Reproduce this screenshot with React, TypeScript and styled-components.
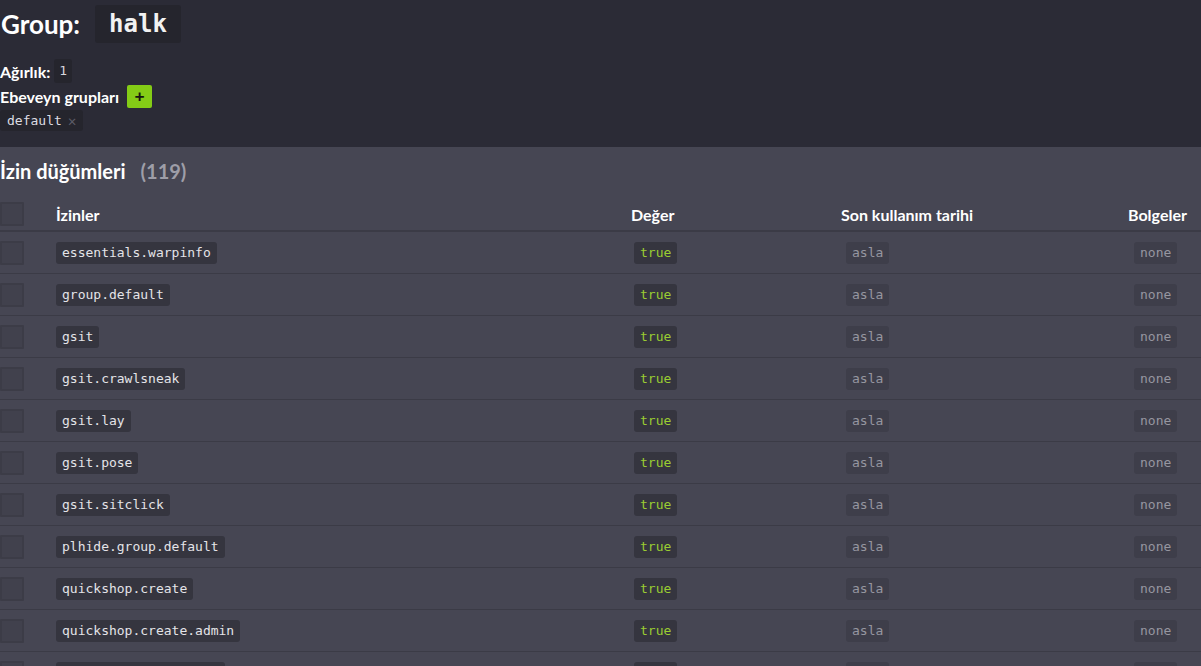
import styled, { createGlobalStyle } from "styled-components";

const GlobalStyle = createGlobalStyle`
  html, body {
    margin: 0;
    padding: 0;
    background: #464653;
    font-family: Lato, "Noto Sans", sans-serif;
    color: #fff;
    overflow: hidden;
  }
`;

const permissions = [
  "essentials.warpinfo",
  "group.default",
  "gsit",
  "gsit.crawlsneak",
  "gsit.lay",
  "gsit.pose",
  "gsit.sitclick",
  "plhide.group.default",
  "quickshop.create",
  "quickshop.create.admin",
  "quickshop.create.buy",
];

export default function App() {
  return (
    <>
      <GlobalStyle />
      <Stl.Top>
        <Stl.TitleRow>
          <Stl.Title>Group:</Stl.Title>
          <Stl.TitleCode>halk</Stl.TitleCode>
        </Stl.TitleRow>
        <Stl.Field>
          <Stl.Label>Ağırlık:</Stl.Label>
          <Stl.SmallCode>1</Stl.SmallCode>
        </Stl.Field>
        <Stl.Field>
          <Stl.Label>Ebeveyn grupları</Stl.Label>
          <Stl.AddButton>+</Stl.AddButton>
        </Stl.Field>
        <Stl.Chips>
          <Stl.Chip>
            default<Stl.ChipClose>×</Stl.ChipClose>
          </Stl.Chip>
        </Stl.Chips>
      </Stl.Top>
      <Stl.Bottom>
        <Stl.SectionTitle>
          İzin düğümleri<Stl.Count>(119)</Stl.Count>
        </Stl.SectionTitle>
        <Stl.Table>
          <thead>
            <tr>
              <Stl.Th $w={56}>
                <Stl.Check />
              </Stl.Th>
              <Stl.Th>İzinler</Stl.Th>
              <Stl.Th $w={210}>Değer</Stl.Th>
              <Stl.Th $w={287}>Son kullanım tarihi</Stl.Th>
              <Stl.Th $w={73}>Bolgeler</Stl.Th>
            </tr>
          </thead>
          <tbody>
            {permissions.map((p) => (
              <tr key={p}>
                <Stl.Td>
                  <Stl.Check />
                </Stl.Td>
                <Stl.Td>
                  <Stl.Code>{p}</Stl.Code>
                </Stl.Td>
                <Stl.Td>
                  <Stl.Badge $tone="true">true</Stl.Badge>
                </Stl.Td>
                <Stl.Td>
                  <Stl.Badge $tone="muted" $shift={5}>
                    asla
                  </Stl.Badge>
                </Stl.Td>
                <Stl.Td>
                  <Stl.Badge $tone="muted" $shift={6}>
                    none
                  </Stl.Badge>
                </Stl.Td>
              </tr>
            ))}
          </tbody>
        </Stl.Table>
      </Stl.Bottom>
    </>
  );
}

const mono = `"DejaVu Sans Mono", "Liberation Mono", monospace`;

const Stl = {
  Top: styled.div`
    background: #2b2b36;
    padding: 5px 0 16px;
  `,
  TitleRow: styled.div`
    display: flex;
    align-items: center;
    gap: 15px;
    height: 38px;
    margin-bottom: 16px;
  `,
  Title: styled.h1`
    margin: 0;
    font-size: 26px;
    font-weight: 700;
    line-height: 38px;
    padding-left: 1px;
  `,
  TitleCode: styled.code`
    font-family: ${mono};
    font-size: 24px;
    font-weight: 700;
    line-height: 38px;
    padding: 0 14px;
    background: #25252d;
    color: #f2f2f2;
    border-radius: 3px;
  `,
  Field: styled.div`
    display: flex;
    align-items: center;
    gap: 4px;
    height: 24px;
    margin-bottom: 1px;
  `,
  Label: styled.span`
    font-size: 16px;
    font-weight: 700;
    color: #fff;
  `,
  SmallCode: styled.code`
    font-family: ${mono};
    font-size: 13px;
    line-height: 24px;
    padding: 0 5px;
    background: #25252d;
    color: #d6d6dc;
    border-radius: 3px;
  `,
  AddButton: styled.button`
    border: none;
    width: 25px;
    height: 23px;
    margin-left: 4px;
    padding: 0;
    border-radius: 2px;
    background: #84cc16;
    color: #16160f;
    font-family: ${mono};
    font-size: 16px;
    font-weight: 700;
    line-height: 23px;
    cursor: pointer;
  `,
  Chips: styled.div`
    display: flex;
    gap: 6px;
    margin-top: 2px;
  `,
  Chip: styled.span`
    display: inline-flex;
    align-items: center;
    height: 21px;
    padding: 0 6px 0 7px;
    background: #25252d;
    color: #dcdce2;
    border-radius: 3px;
    font-family: ${mono};
    font-size: 13px;
  `,
  ChipClose: styled.span`
    margin-left: 6px;
    color: #5d5d68;
    font-size: 15px;
    font-family: Lato, sans-serif;
  `,
  Bottom: styled.div`
    background: #464653;
    padding-top: 11px;
  `,
  SectionTitle: styled.h2`
    margin: 0 0 14px;
    font-size: 20px;
    font-weight: 700;
    line-height: 26px;
    color: #fff;
  `,
  Count: styled.span`
    margin-left: 15px;
    color: #9e9ea8;
  `,
  Table: styled.table`
    width: 100%;
    border-collapse: collapse;
  `,
  Th: styled.th<{ $w?: number }>`
    text-align: left;
    font-size: 16px;
    font-weight: 700;
    color: #fff;
    height: 32px;
    padding: 0;
    border-bottom: 2px solid #3b3b46;
    ${({ $w }) => ($w ? `width: ${$w}px;` : "")}
  `,
  Td: styled.td`
    height: 41px;
    padding: 0;
    border-bottom: 1px solid #3b3b46;
    vertical-align: middle;
  `,
  Check: styled.span`
    display: block;
    width: 20px;
    height: 20px;
    border: 2px solid #3c3c47;
    background: #41414d;
    border-radius: 1px;
  `,
  Code: styled.code`
    display: inline-block;
    font-family: ${mono};
    font-size: 13px;
    line-height: 22px;
    padding: 0 6px;
    background: #35353f;
    color: #e4e4e8;
    border-radius: 3px;
  `,
  Badge: styled.code<{ $tone: "true" | "muted"; $shift?: number }>`
    display: inline-block;
    margin-left: ${({ $shift }) => $shift ?? 3}px;
    font-family: ${mono};
    font-size: 13px;
    line-height: 22px;
    padding: 0 6px;
    border-radius: 3px;
    background: ${({ $tone }) => ($tone === "true" ? "#35353f" : "#3e3e4a")};
    color: ${({ $tone }) => ($tone === "true" ? "#9acd32" : "#9696a0")};
  `,
};
